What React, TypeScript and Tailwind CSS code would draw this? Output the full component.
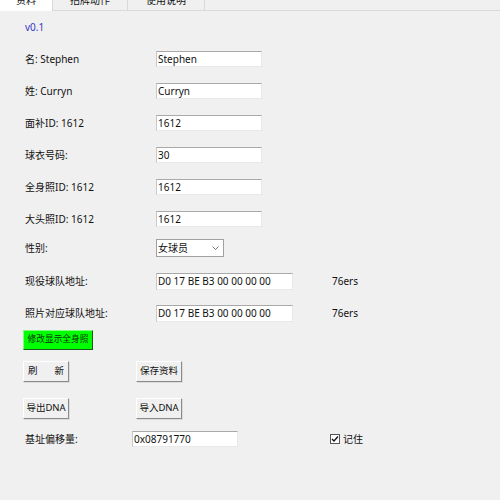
import React from 'react';

const font = { fontFamily: '"Noto Sans", "Noto Sans CJK SC", sans-serif' };

interface FieldRowProps {
  label: string;
  value: string;
  height: string;
  wide?: boolean;
  extra?: string;
}

const TextBox: React.FC<{ value: string; className: string }> = ({ value, className }) => (
  <div
    className={`flex items-center whitespace-nowrap bg-white border-t border-l border-t-[#a9a9a9] border-l-[#c8c8c8] border-r border-b border-r-[#e8e8e8] border-b-[#e8e8e8] pl-[1px] text-[10px] text-[#111] ${className}`}
  >
    {value}
  </div>
);

const FieldRow: React.FC<FieldRowProps> = ({ label, value, height, wide, extra }) => (
  <div className={`flex items-center ${height}`}>
    <div className="w-[131px] whitespace-nowrap text-[10px] text-[#111]">{label}</div>
    <TextBox value={value} className={wide ? 'w-[137px] h-[17px]' : 'w-[106px] h-[16px]'} />
    {extra && <div className="ml-[39px] text-[10px] text-[#111]">{extra}</div>}
  </div>
);

const Button: React.FC<{ children: React.ReactNode; className?: string }> = ({ children, className = '' }) => (
  <div
    className={`flex items-center whitespace-nowrap h-[21px] w-[46px] px-[4px] bg-[#f0f0f0] border-t border-l border-t-white border-l-white border-r border-b border-r-[#8a8a8a] border-b-[#8a8a8a] shadow-[1px_1px_0_#dcdcdc] text-[9.5px] text-[#111] ${className}`}
  >
    {children}
  </div>
);

export default function App() {
  return (
    <div style={font} className="w-[500px] h-[500px] bg-[#f0f0f0] overflow-hidden">
      {/* 标签页（上半部分在窗口外） */}
      <div className="flex h-[11px]">
        <div className="w-[52px] h-[11px] bg-white overflow-hidden flex justify-center">
          <span className="text-[10px] leading-[10px] -mt-[5px] text-[#111]">资料</span>
        </div>
        <div className="w-[76px] h-[11px] border-l border-r border-b border-[#d9d9d9] overflow-hidden flex justify-center">
          <span className="text-[10px] leading-[10px] -mt-[5px] text-[#111]">招牌动作</span>
        </div>
        <div className="w-[77px] h-[11px] border-r border-b border-[#d9d9d9] overflow-hidden flex justify-center">
          <span className="text-[10px] leading-[10px] -mt-[5px] text-[#111]">使用说明</span>
        </div>
        <div className="flex-1 h-[11px] border-b border-[#d9d9d9]" />
      </div>

      <div className="pl-[25px]">
        <div className="h-[32px] flex items-center text-[10px] text-[#3737c8]">v0.1</div>

        <FieldRow label="名: Stephen" value="Stephen" height="h-[32px]" />
        <FieldRow label="姓: Curryn" value="Curryn" height="h-[32px]" />
        <FieldRow label="面补ID: 1612" value="1612" height="h-[32px]" />
        <FieldRow label="球衣号码:" value="30" height="h-[32px]" />
        <FieldRow label="全身照ID: 1612" value="1612" height="h-[32px]" />
        <FieldRow label="大头照ID: 1612" value="1612" height="h-[32px]" />

        {/* 性别 */}
        <div className="flex items-center h-[26px]">
          <div className="w-[131px] text-[10px] text-[#111]">性别:</div>
          <div className="flex items-center justify-between w-[68px] h-[18px] bg-white border border-[#a0a0a0] pl-[1px] pr-[4px] text-[10px] text-[#111]">
            <span>女球员</span>
            <svg width="7" height="4" viewBox="0 0 7 4" fill="none" stroke="#555" strokeWidth="0.8">
              <path d="M0.5 0.5 L3.5 3.5 L6.5 0.5" />
            </svg>
          </div>
        </div>

        <FieldRow label="现役球队地址:" value="D0 17 BE B3 00 00 00 00" height="h-[40px]" wide extra="76ers" />
        <FieldRow label="照片对应球队地址:" value="D0 17 BE B3 00 00 00 00" height="h-[24px]" wide extra="76ers" />

        <div className="-ml-[2px] mt-[5px] flex items-center justify-center whitespace-nowrap w-[70px] h-[20px] bg-[#00ff00] border-t border-l border-t-[#7cff7c] border-l-[#7cff7c] border-r border-b border-r-[#1a5a1a] border-b-[#1a5a1a] text-[8.7px] text-[#0a300a]">
          修改显示全身照
        </div>

        <div className="-ml-[2px] mt-[11px] flex">
          <Button className="justify-between">
            <span>刷</span>
            <span>新</span>
          </Button>
          <Button className="ml-[67px] justify-center px-0">保存资料</Button>
        </div>

        <div className="-ml-[2px] mt-[16px] flex">
          <Button className="justify-center px-0">导出DNA</Button>
          <Button className="ml-[67px] justify-center px-0">导入DNA</Button>
        </div>

        <div className="mt-[12px] flex items-center h-[16px]">
          <div className="w-[107px] text-[10px] text-[#111]">基址偏移量:</div>
          <TextBox value="0x08791770" className="w-[106px] h-[16px]" />
          <div className="ml-[92px] flex items-center">
            <div className="w-[10px] h-[10px] bg-white border border-[#555] flex items-center justify-center">
              <svg width="8" height="8" viewBox="0 0 8 8" fill="none" stroke="#111" strokeWidth="1.3">
                <path d="M1 4 L3 6 L7 1.5" />
              </svg>
            </div>
            <span className="ml-[3px] text-[10px] text-[#111]">记住</span>
          </div>
        </div>
      </div>
    </div>
  );
}
